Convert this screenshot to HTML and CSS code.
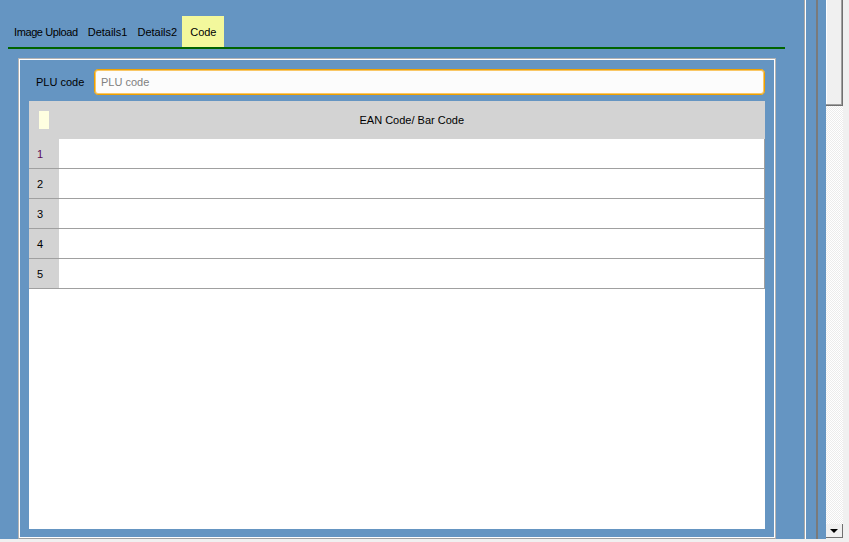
FILE: index.html
```html
<!DOCTYPE html>
<html lang="en">
<head>
    <meta charset="UTF-8">
    <title>Code</title>
    <link rel="stylesheet" href="styles.css">
</head>
<body>
    <div class="window">
        <div class="outer">
            <div class="mid">
                <div class="inner">
                    <div class="tabs">
                        <a href="#" class="tab">Image Upload</a>
                        <a href="#" class="tab">Details1</a>
                        <a href="#" class="tab">Details2</a>
                        <a href="#" class="tab active">Code</a>
                    </div>
                    <div class="panel">
                        <div class="plu-row">
                            <label class="plu-label" for="plu">PLU code</label>
                            <input class="plu-input" id="plu" type="text" placeholder="PLU code">
                        </div>
                        <div class="grid">
                            <table class="codes">
                                <thead>
                                    <tr>
                                        <th class="num"><span class="check"></span></th>
                                        <th>EAN Code/ Bar Code</th>
                                    </tr>
                                </thead>
                                <tbody>
                                    <tr><td class="num first">1</td><td></td></tr>
                                    <tr><td class="num">2</td><td></td></tr>
                                    <tr><td class="num">3</td><td></td></tr>
                                    <tr><td class="num">4</td><td></td></tr>
                                    <tr><td class="num">5</td><td></td></tr>
                                </tbody>
                            </table>
                        </div>
                    </div>
                </div>
            </div>
        </div>
        <div class="scrollbar">
            <div class="track">
                <div class="thumb"></div>
            </div>
            <div class="arrow-down"></div>
        </div>
    </div>
    <div class="bottom-strip"></div>
</body>
</html>
```

FILE: styles.css
```css
body {
    margin: 0;
    font-family: "Liberation Sans", Arial, sans-serif;
    font-size: 11px;
    color: #000000;
    background-color: #f0f0f0;
    overflow: hidden;
}
.window {
    display: flex;
    height: 539px;
}
.outer {
    flex: 1;
    display: flex;
    background-color: #6595c2;
    padding-right: 8px;
}
.mid {
    flex: 1;
    display: flex;
    border-right: 2px solid #7a7a7a;
    padding-right: 10px;
}
.inner {
    width: 804px;
    display: flex;
    flex-direction: column;
    border-right: 1px solid #a8a8a8;
    box-shadow: 1px 0 0 #ffffff;
}
.tabs {
    display: flex;
    margin: 16px 19px 0 8px;
    height: 31px;
    border-bottom: 2px solid #006400;
}
.tab {
    display: flex;
    align-items: center;
    padding: 0 5px;
    color: #000000;
    text-decoration: none;
}
.tab:first-child {
    padding-left: 6px;
    letter-spacing: -0.4px;
}
.tab.active {
    background-color: #f3f89c;
    padding: 0 8px;
}
.panel {
    flex: 1;
    display: flex;
    flex-direction: column;
    margin: 9px 28px 0 18px;
    padding: 10px 10px 9px 10px;
    border: 1px solid #b4b4b4;
    border-bottom-color: #a0a0a0;
    box-shadow: inset 0 0 0 1px #ffffff;
}
.plu-row {
    display: flex;
    align-items: center;
    height: 26px;
    margin-bottom: 6px;
}
.plu-label {
    padding-left: 7px;
    width: 58px;
}
.plu-input {
    flex: 1;
    height: 26px;
    box-sizing: border-box;
    border: 1px solid #eea000;
    box-shadow: inset 0 0 0 1px #f9c766;
    border-radius: 4px;
    background-color: #fcfcfc;
    padding: 0 6px;
    font-family: "Liberation Sans", Arial, sans-serif;
    font-size: 11px;
    outline: none;
}
.plu-input::placeholder {
    color: #808080;
}
.grid {
    flex: 1;
    background-color: #ffffff;
}
.codes {
    width: 100%;
    border-collapse: collapse;
}
.codes th {
    background-color: #d3d3d3;
    height: 38px;
    padding: 0;
    font-weight: normal;
    text-align: center;
}
.codes td {
    height: 29px;
    padding: 0;
    border-bottom: 1px solid #a0a0a0;
}
.codes td:last-child {
    border-right: 1px solid #a0a0a0;
}
.codes .num {
    width: 30px;
    background-color: #d3d3d3;
    text-align: left;
    padding-left: 8px;
    box-sizing: border-box;
}
.codes th.num {
    padding-left: 10px;
}
.codes td.first {
    color: #5a0a5a;
}
.check {
    display: block;
    width: 10px;
    height: 18px;
    background-color: #ffffe0;
}
.scrollbar {
    width: 23px;
    display: flex;
    flex-direction: column;
    background-color: #f0f0f0;
}
.track {
    flex: 1;
    width: 17px;
    background-color: #f7f7f7;
    background-image: repeating-conic-gradient(#ffffff 0 25%, #ececec 0 50%);
    background-size: 2px 2px;
}
.thumb {
    height: 105px;
    background-color: #f0f0f0;
    border-right: 1px solid #707070;
    border-bottom: 1px solid #707070;
    box-shadow: inset -1px -1px 0 #a0a0a0, inset 1px 0 0 #ffffff;
}
.arrow-down {
    width: 16px;
    height: 13px;
    margin-bottom: 1px;
    background-color: #f0f0f0;
    border-right: 1px solid #707070;
    border-bottom: 1px solid #707070;
    position: relative;
}
.arrow-down::after {
    content: "";
    position: absolute;
    left: 4px;
    top: 5px;
    border-left: 4px solid transparent;
    border-right: 4px solid transparent;
    border-top: 4px solid #000000;
}
.bottom-strip {
    height: 3px;
    background-color: #f0f0f0;
}
```
